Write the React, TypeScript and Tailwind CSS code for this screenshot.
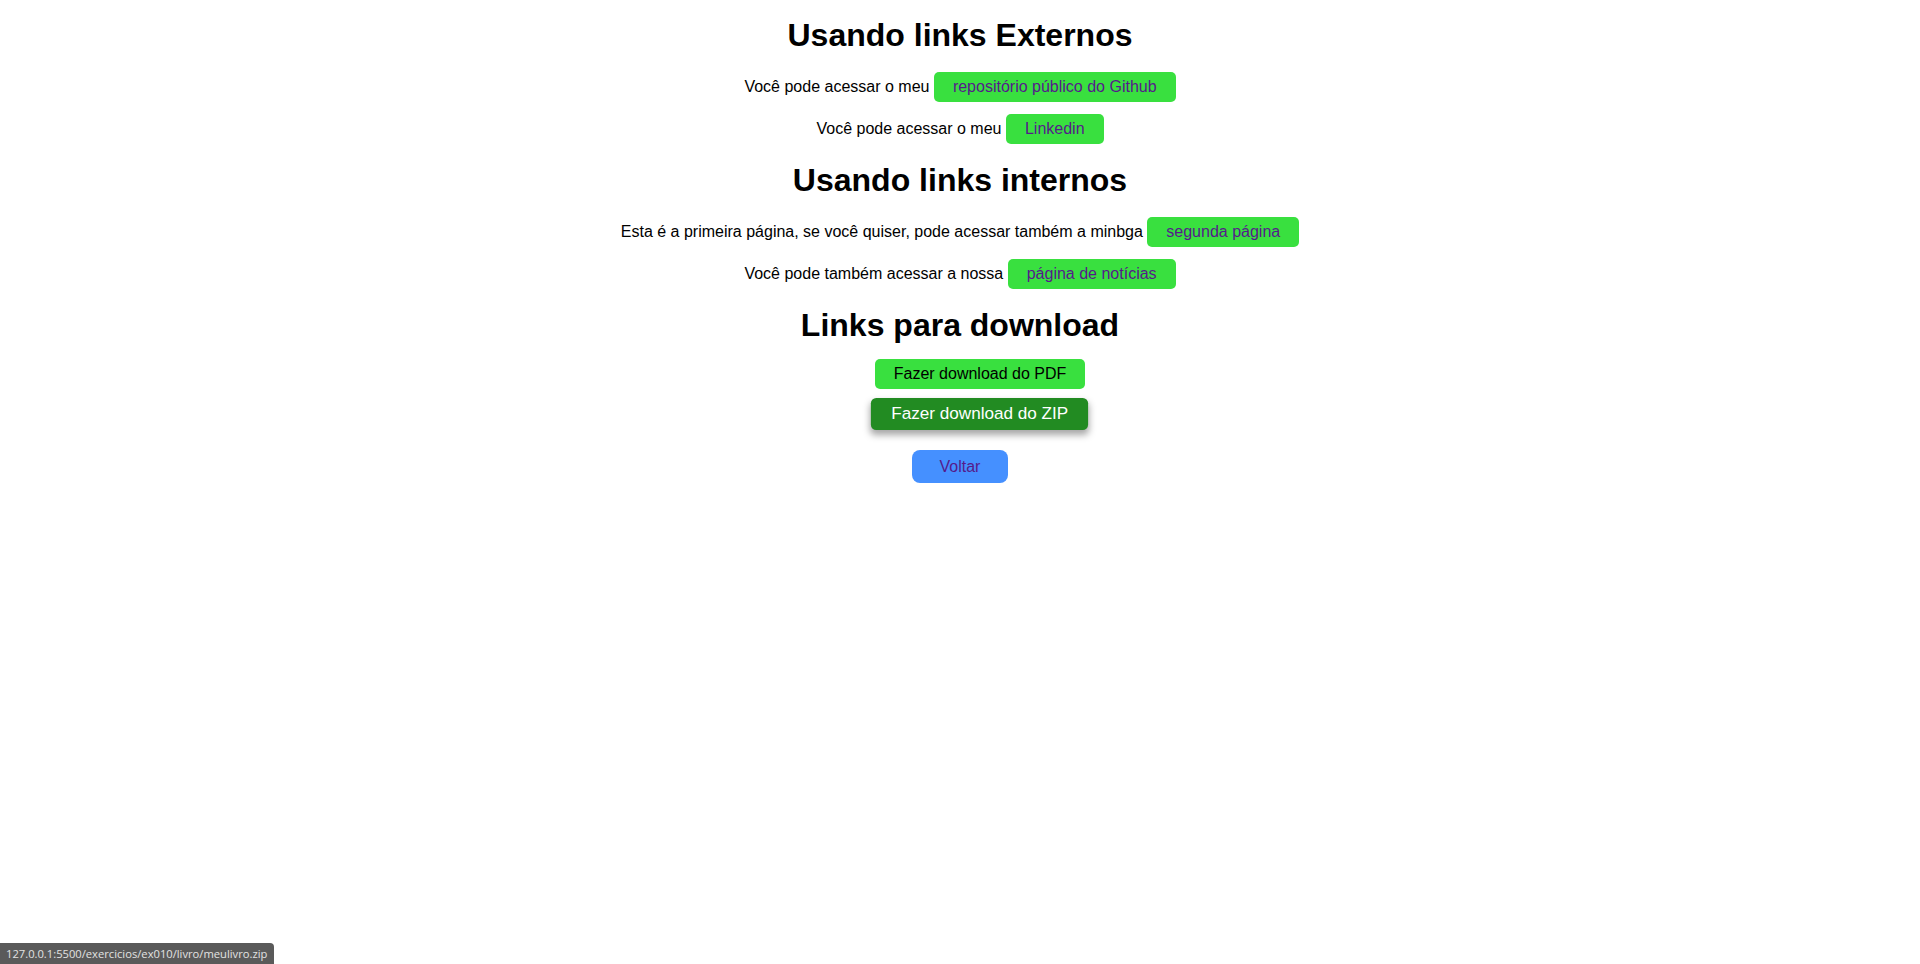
const greenBtn =
    "inline-block rounded-[5px] bg-[#39e03f] px-[19px] py-1.5 text-[#551a8b]";

const App = () => {
    return (
        <main className="min-h-[964px] w-full bg-white text-black font-['Liberation_Sans',Arial,sans-serif] text-[16px] leading-[18px] text-center">
            <section className="pt-[17px]">
                <h1 className="text-[32px] leading-[37px] font-bold">
                    Usando links Externos
                </h1>
                <p className="mt-[18px]">
                    Você pode acessar o meu{" "}
                    <a href="#" className={greenBtn}>
                        repositório público do Github
                    </a>
                </p>
                <p className="mt-[12px]">
                    Você pode acessar o meu{" "}
                    <a href="#" className={greenBtn}>
                        Linkedin
                    </a>
                </p>
            </section>

            <section className="pt-[18px]">
                <h2 className="text-[32px] leading-[37px] font-bold">
                    Usando links internos
                </h2>
                <p className="mt-[18px]">
                    Esta é a primeira página, se você quiser, pode acessar também a minbga{" "}
                    <a href="#" className={greenBtn}>
                        segunda página
                    </a>
                </p>
                <p className="mt-[12px]">
                    Você pode também acessar a nossa{" "}
                    <a href="#" className={greenBtn}>
                        página de notícias
                    </a>
                </p>
            </section>

            <section className="pt-[18px]">
                <h2 className="text-[32px] leading-[37px] font-bold">
                    Links para download
                </h2>
                <ul className="pl-10 mt-[15px]">
                    <li>
                        <a
                            href="#"
                            className="inline-block rounded-[5px] bg-[#39e03f] px-[19px] py-1.5 text-black"
                        >
                            Fazer download do PDF
                        </a>
                    </li>
                    <li className="mt-[10px]">
                        <a
                            href="#"
                            className="inline-block rounded-[5px] bg-[#228b22] px-[19px] py-1.5 text-white scale-[1.07] shadow-[0_4px_7px_rgba(0,0,0,0.35)]"
                        >
                            Fazer download do ZIP
                        </a>
                    </li>
                </ul>
                <div className="mt-[21px]">
                    <a
                        href="#"
                        className="inline-block rounded-[8px] bg-[#4590ff] px-7 py-[7.5px] text-[#551a8b]"
                    >
                        Voltar
                    </a>
                </div>
            </section>

            {/* barra de status do navegador */}
            <div className="fixed bottom-0 left-0 h-[21px] w-[274px] rounded-tr-[4px] bg-[#5a5a5a] pl-[6px] text-left text-[11.2px] leading-[21px] text-[#e2e2e2] font-['Open_Sans',sans-serif]">
                127.0.0.1:5500/exercicios/ex010/livro/meulivro.zip
            </div>
        </main>
    );
};

export default App;
